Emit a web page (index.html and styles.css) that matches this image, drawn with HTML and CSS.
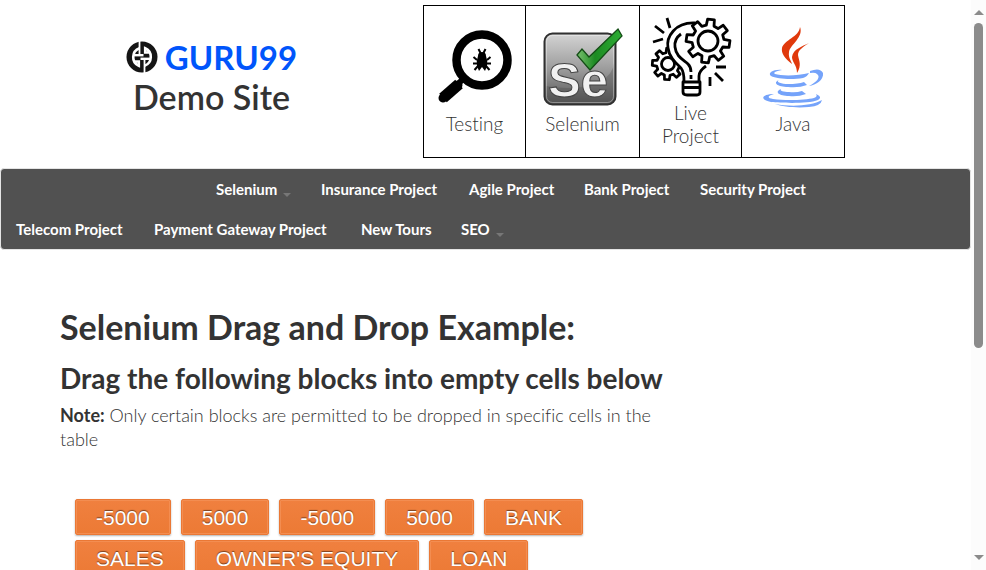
FILE: index.html
```
<!DOCTYPE html>
<html lang="en">
<head>
<meta charset="utf-8">
<title>Guru99 Demo Site</title>
<link rel="stylesheet" href="styles.css">
</head>
<body>
<div class="viewport">
  <header class="header">
    <a class="brand" href="#">
      <span class="brand-logo">
        <svg class="brand-mark" viewBox="0 0 32 32" aria-hidden="true">
          <circle cx="16" cy="16" r="15.500" fill="#151515"/>
          <g id="g" fill="none" stroke="#fff">
            <path d="M13.500 0V14.500" stroke-width="1.800"/>
            <path d="M13.500 7.200A9.500 9.500 0 0 0 12.800 24.800V20.500H8" stroke-width="2.600"/>
            <path d="M8 14.200H17.500" stroke-width="2.400"/>
          </g>
          <use href="#g" transform="rotate(180 16 16)"/>
        </svg>
        <span class="brand-name">GURU99</span>
      </span>
      <span class="brand-sub">Demo Site</span>
    </a>
    <nav class="tiles" aria-label="Topics">
      <a class="tile" href="#">
        <svg class="icon" viewBox="0 0 80 80" aria-hidden="true">
          <circle cx="47" cy="32" r="25.500" fill="none" stroke="#000" stroke-width="8.500"/>
          <path d="M29 50L23 56" stroke="#000" stroke-width="6"/>
          <path d="M23 57L8 70" stroke="#000" stroke-width="9" stroke-linecap="round"/>
          <path d="M24 56L8 70" stroke="#000" stroke-width="11.500"/>
          <path d="M47 24Q51 24 51 28Q53 33 52 38L50 43L47 39L44 43L42 38Q41 33 43 28Q43 24 47 24Z"/>
          <path d="M45.500 25L43.500 21M48.500 25L50.500 21M42 32L38.500 29M52 32L55.500 29M42 35.500H38M52 35.500H56M43 38L39.500 42M51 38L54.500 42" stroke="#000" stroke-width="2" fill="none"/>
        </svg>
        <span>Testing</span>
      </a>
      <a class="tile" href="#">
        <svg class="icon" viewBox="0 0 80 80" aria-hidden="true">
          <defs>
            <linearGradient id="plate" x1="0" y1="0" x2="0" y2="1"><stop offset="0" stop-color="#d4d4d4"/><stop offset=".5" stop-color="#9c9c9c"/><stop offset="1" stop-color="#555"/></linearGradient>
            <linearGradient id="tick" x1="0" y1="0" x2="1" y2="0"><stop offset="0" stop-color="#79c06f"/><stop offset=".4" stop-color="#1c8a22"/><stop offset="1" stop-color="#2eae35"/></linearGradient>
          </defs>
          <rect x="1.500" y="5.500" width="71" height="71" rx="8" fill="url(#plate)" stroke="#303030" stroke-width="2"/>
          <path d="M3 58Q35 64 58 53Q70 46 71 35V69Q71 75 65 75H9Q3 75 3 69Z" fill="#444" opacity=".3"/>
          <rect x="3.500" y="7.500" width="67" height="67" rx="6" fill="none" stroke="#fff" opacity=".35"/>
          <text class="se" x="5" y="69">Se</text>
          <path d="M34 27L39 21L46 29L75 1L79 8L47 42Z" fill="url(#tick)" stroke="#144d16" stroke-width="1.300"/>
        </svg>
        <span>Selenium</span>
      </a>
      <a class="tile" href="#">
        <svg class="icon" viewBox="2 2 80 80" fill="none" stroke="#000" stroke-width="2.800" stroke-linejoin="round" stroke-linecap="butt" aria-hidden="true">
          <defs>
            <path id="cog" d="M15.500-3.900L21.700-3.400V3.400L15.500 3.900L13.700 8.200L17.700 12.900L12.900 17.700L8.200 13.700L3.900 15.500L3.400 21.700H-3.400L-3.900 15.500L-8.200 13.700L-12.900 17.700L-17.700 12.900L-13.700 8.200L-15.500 3.900L-21.700 3.400V-3.400L-15.500-3.900L-13.700-8.200L-17.700-12.900L-12.900-17.700L-8.200-13.700L-3.900-15.500L-3.400-21.700H3.400L3.900-15.500L8.200-13.700L12.900-17.700L17.700-12.900L13.700-8.200Z"/>
          </defs>
          <g transform="translate(19 49)">
            <use href="#cog" transform="rotate(4) scale(.72)" stroke-width="3.800"/>
            <circle r="6.500"/>
          </g>
          <path d="M46 8C26 7 17 22 19 33C20 42 27 48 32 53Q35 57 35 66H50V61Q50 56 57 51L70 30Z" fill="#fff" stroke="none"/>
          <path d="M46 8C26 7 17 22 19 33C20 42 27 48 32 53Q35 57 35 66M50 66V61Q50 56 57 51"/>
          <path d="M32 19Q25 24 26 32C27 42 35 45 39 49Q42 52 42 57M42 60V64"/>
          <path d="M34 67H51V77Q51 80 48 80H38Q34 80 34 77ZM35 72.500H50"/>
          <g transform="translate(59 26)">
            <use href="#cog" transform="rotate(8)" fill="#fff"/>
            <circle r="10"/>
          </g>
          <path d="M18 3L21 13M6 11L15 18M4 27L14 24M67 52H77M66 58L74 66M61 62V71"/>
        </svg>
        <span>Live<br>Project</span>
      </a>
      <a class="tile" href="#">
        <svg class="icon" viewBox="-2 7 80 80" aria-hidden="true">
          <g fill="#e0390c">
            <path d="M45 6C49 16 35 24 34 31C33 37 37 41 37 43C30 38 26 32 27 27C29 19 44 16 45 6Z"/>
            <path d="M54 22C48 26 43 29 43 34C44 40 47 44 42 52C42 44 37 41 37 36C38 28 48 25 54 22Z"/>
          </g>
          <g fill="#75a3fa">
            <path d="M27 49C20 50 18 52 20 53C26 55 43 55 54 52Q52 56 48 57C37 59 22 58 16 55C12 52 19 48 27 49Z"/>
            <path d="M55 50Q65 46 68 52C69 59 61 64 54 65C62 61 66 56 62 53Q60 51 55 52Z"/>
            <path d="M24 59C20 61 27 63 33 63Q43 63 49 61L52 64Q44 67 33 66C23 66 17 62 24 59Z"/>
            <path d="M26 68C24 70 29 71 34 71Q41 72 47 70L51 73Q43 76 34 75C24 75 19 71 26 68Z"/>
            <path d="M19 73C12 75 12 77 18 78C31 80 51 79 59 77Q63 76 61 73Q68 76 63 79C53 83 27 82 16 81C3 78 8 73 19 73Z"/>
            <path d="M20 83C36 86 57 85 67 79Q66 85 54 86C42 87 28 86 20 83Z"/>
          </g>
        </svg>
        <span>Java</span>
      </a>
    </nav>
  </header>
  <nav class="menu" aria-label="Main">
    <div class="menu-row menu-row-first">
      <a href="#">Selenium<i class="caret"></i></a>
      <a href="#">Insurance Project</a>
      <a href="#">Agile Project</a>
      <a href="#">Bank Project</a>
      <a href="#">Security Project</a>
    </div>
    <div class="menu-row menu-row-second">
      <a href="#">Telecom Project</a>
      <a href="#">Payment Gateway Project</a>
      <a href="#">New Tours</a>
      <a href="#">SEO<i class="caret"></i></a>
    </div>
  </nav>
  <main class="content">
    <h1>Selenium Drag and Drop Example:</h1>
    <h2>Drag the following blocks into empty cells below</h2>
    <p><strong>Note:</strong> Only certain blocks are permitted to be dropped in specific cells in the table</p>
    <ul class="blocks">
      <li><a href="#">-5000</a></li>
      <li><a href="#">5000</a></li>
      <li><a href="#">-5000</a></li>
      <li><a href="#">5000</a></li>
      <li><a href="#">BANK</a></li>
      <li><a href="#">SALES</a></li>
      <li><a href="#">OWNER'S EQUITY</a></li>
      <li><a href="#">LOAN</a></li>
    </ul>
  </main>
</div>
<div class="scrollbar" aria-hidden="true">
  <i class="arrow arrow-up"></i>
  <div class="track"><div class="thumb"></div></div>
  <i class="arrow arrow-down"></i>
</div>
</body>
</html>
```
FILE: styles.css
```
* { box-sizing: border-box; }
body {
  display: flex;
  height: 100vh;
  margin: 0;
  overflow: hidden;
  background: #fff;
  color: #333;
  font-family: Lato, sans-serif;
  font-variant-ligatures: none;
}
a { color: inherit; text-decoration: none; }

.viewport { flex: 1; min-width: 0; overflow: hidden; }

.header {
  display: grid;
  grid-template-columns: 423px auto;
  justify-content: start;
  align-items: start;
  padding-top: 5px;
}
.brand {
  display: flex;
  flex-direction: column;
  align-items: center;
  padding-top: 32px;
}
.brand-logo { display: flex; align-items: center; gap: 7px; height: 40px; }
.brand-mark { width: 32px; height: 32px; }
.brand-name { font-size: 33px; line-height: 40px; font-weight: 700; color: #0055fb; }
.brand-sub { font-size: 34px; line-height: 40px; font-weight: 600; }

.tiles {
  display: grid;
  grid-template-columns: 103px 114px 102px 103px;
  min-height: 153px;
  border: 1px solid #000;
  border-width: 1px 0;
}
.tile {
  display: flex;
  flex-direction: column;
  align-items: center;
  justify-content: center;
  gap: 4px;
  border-right: 1px solid #000;
  font-size: 19px;
  line-height: 23px;
  font-weight: 300;
  text-align: center;
}
.tile:first-child { border-left: 1px solid #000; }
.icon { width: 80px; height: 80px; overflow: visible; }
.se {
  font: bold 49px "Liberation Sans", sans-serif;
  fill: #f1f1f1;
  stroke: #444;
  stroke-width: 1px;
}

.menu {
  margin: 10px 0 0;
  border: 1px solid #e4e4e4;
  border-radius: 4px;
  background: #515151;
}
.menu-row { display: grid; height: 40px; align-items: center; }
.menu-row-first { grid-template-columns: 105px 148px 115px 116px auto; padding-left: 215px; justify-content: start; }
.menu-row-second { grid-template-columns: 138px 207px 100px auto; padding-left: 15px; justify-content: start; }
.menu a { color: #fff; font-size: 15px; font-weight: 700; white-space: nowrap; }
.caret {
  display: inline-block;
  margin-left: 6px;
  border: 4px solid transparent;
  border-top-color: #777;
  border-bottom: 0;
  vertical-align: -2px;
}

.content { padding: 55px 60px 0; }
h1 { margin: 0; font-size: 34px; line-height: 44px; font-weight: 700; }
h2 { margin: 11px 0 7px; font-size: 28px; line-height: 36px; font-weight: 700; }
p { max-width: 610px; margin: 0; font-size: 18px; line-height: 24px; font-weight: 300; }
strong { font-weight: 700; }

.blocks {
  display: flex;
  flex-wrap: wrap;
  gap: 5px 10px;
  max-width: 570px;
  margin: 48px 0 0 15px;
  padding: 0;
  list-style: none;
}
.blocks a {
  display: block;
  padding: 6px 20px 4px;
  border: 1px solid #ea7835;
  border-radius: 2px;
  background: linear-gradient(#f0803f, #ec7a35);
  box-shadow: inset 0 0 0 1px #f38d51, 0 1px 2px rgba(0, 0, 0, .3);
  color: #fff;
  font: 21px/24px "Liberation Sans", sans-serif;
  text-shadow: 0 -1px 1px rgba(0, 0, 0, .5);
  white-space: nowrap;
}

.scrollbar {
  display: flex;
  flex-direction: column;
  align-items: center;
  width: 15px;
  padding: 10px 0;
  background: #fcfcfc;
}
.track { flex: 1; width: 9px; margin: 8px 0; }
.thumb { height: 62%; border-radius: 5px; background: #8b8b8b; }
.arrow { border: 5px solid transparent; }
.arrow-up { border-top: 0; border-bottom-color: #8b8b8b; }
.arrow-down { border-bottom: 0; border-top-color: #8b8b8b; }
```
